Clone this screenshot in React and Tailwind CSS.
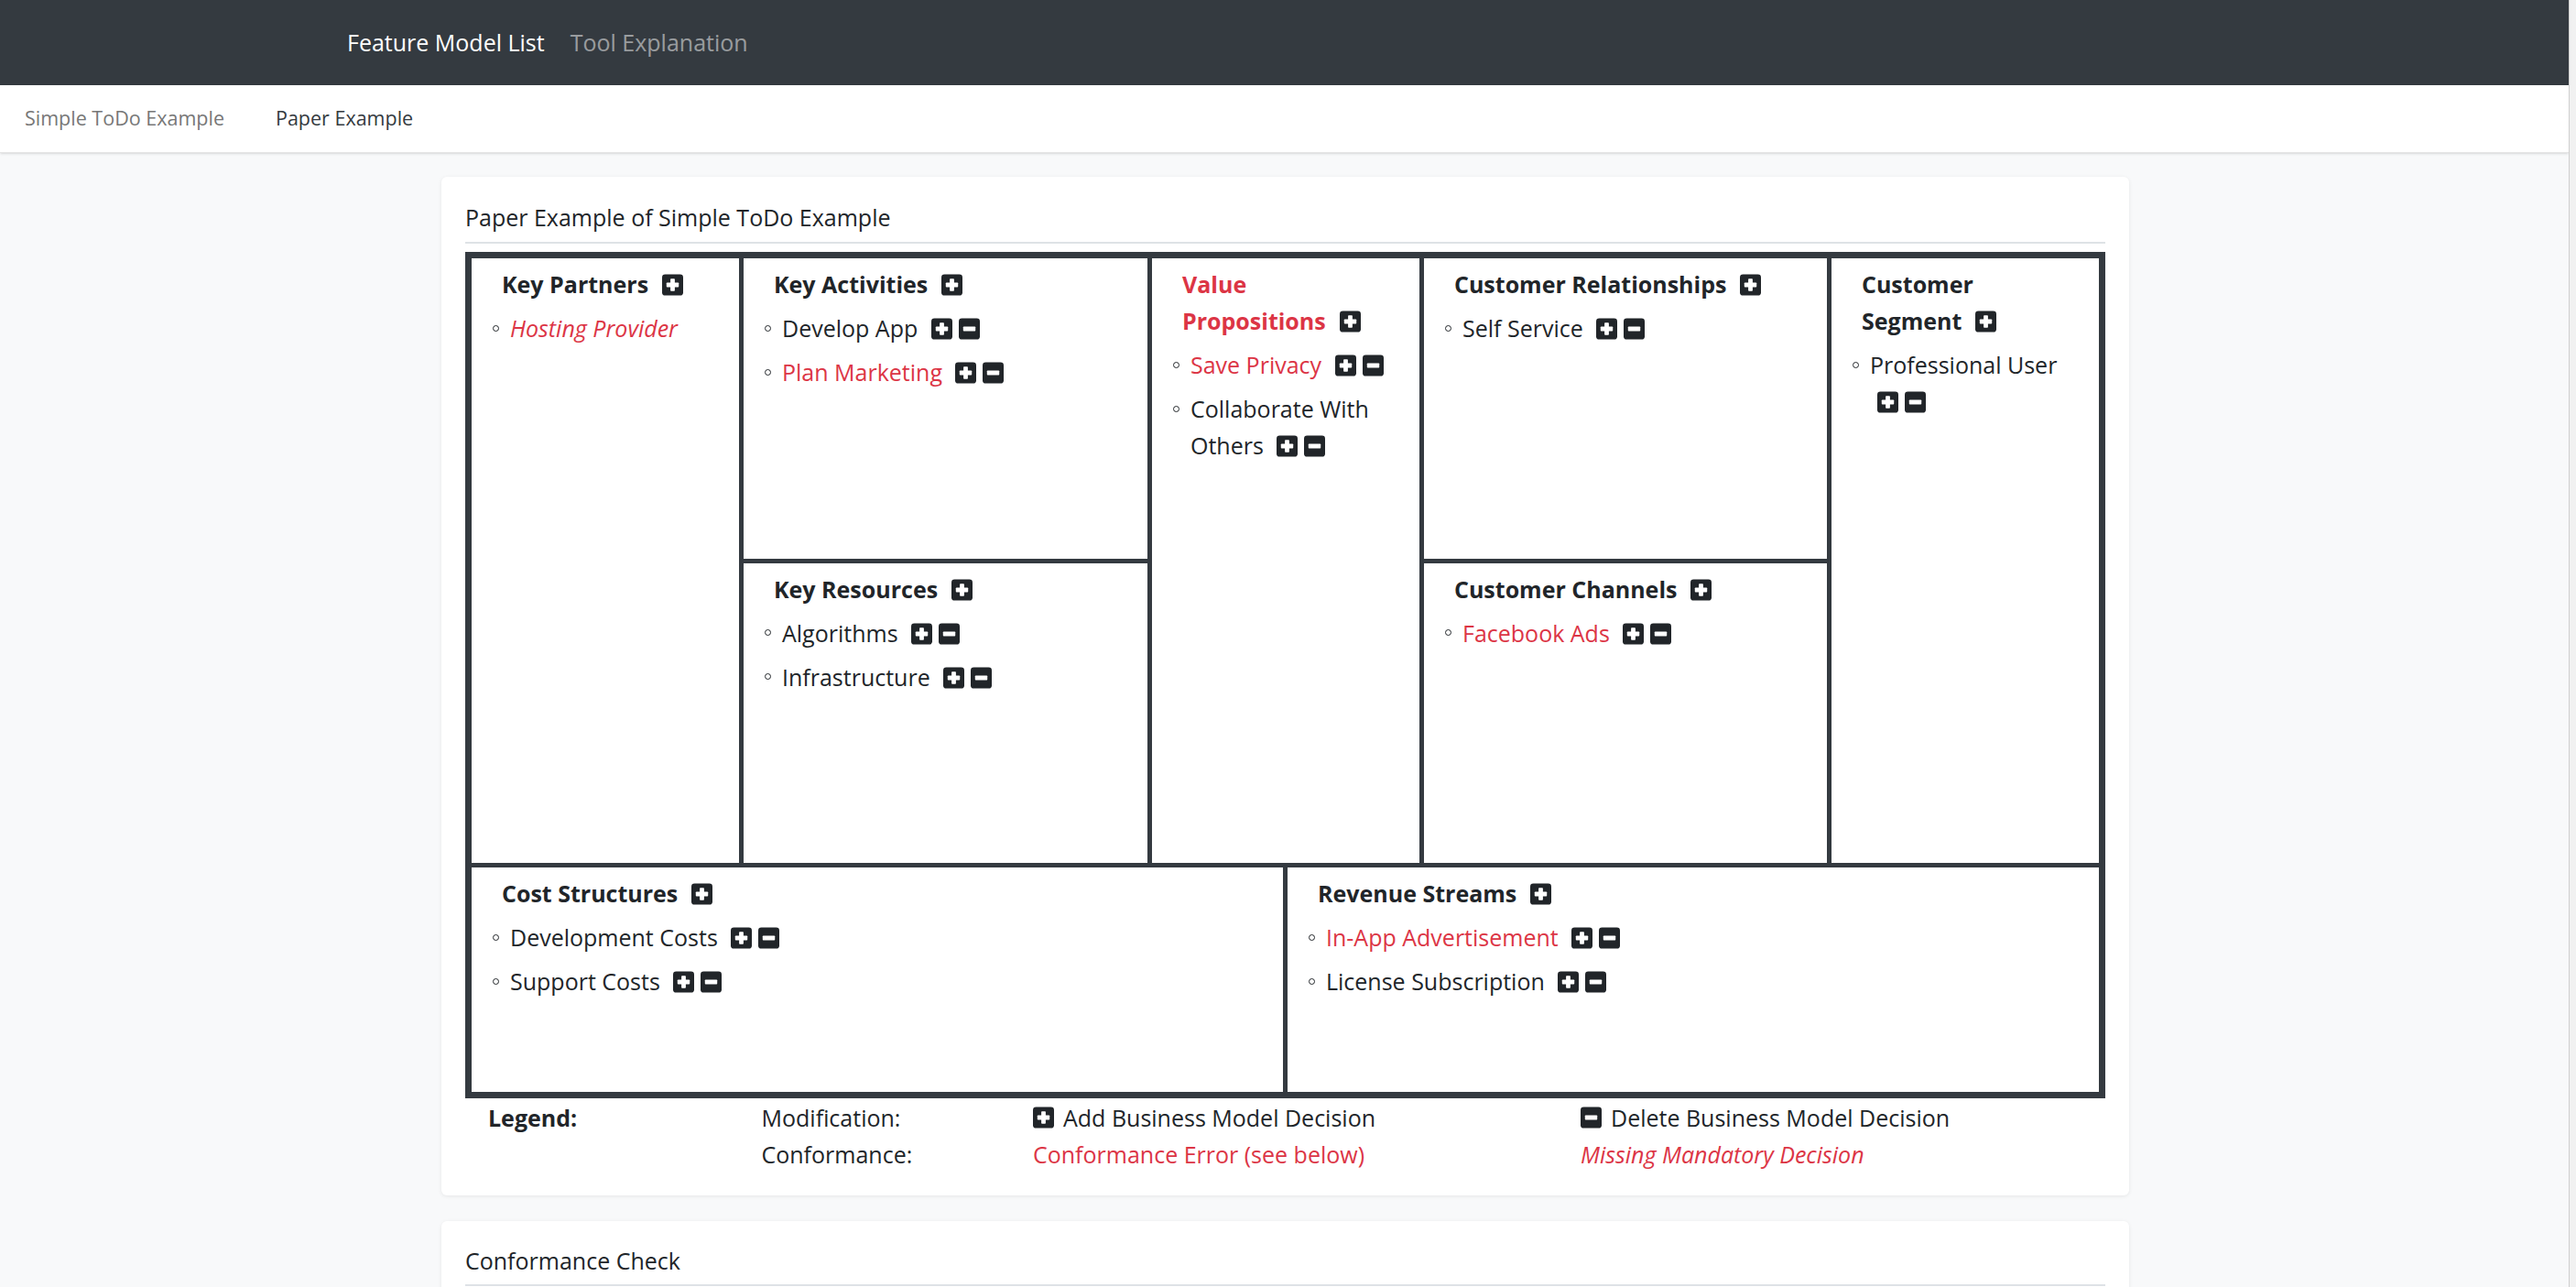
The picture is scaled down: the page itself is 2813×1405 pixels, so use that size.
import React from 'react';

const FONT = "font-['Open_Sans',sans-serif]";
const LINE = 'border-[#343a40]';

function PlusBox({ className = '' }) {
  return (
    <svg viewBox="0 0 24 24" className={`inline-block w-[23px] h-[24px] ${className}`}>
      <rect x="0" y="0" width="24" height="24" rx="3.5" fill="#212529" />
      <rect x="9.5" y="5" width="5" height="14" rx="0.8" fill="#fff" />
      <rect x="5" y="9.5" width="14" height="5" rx="0.8" fill="#fff" />
    </svg>
  );
}

function MinusBox({ className = '' }) {
  return (
    <svg viewBox="0 0 24 24" className={`inline-block w-[23px] h-[24px] ${className}`}>
      <rect x="0" y="0" width="24" height="24" rx="3.5" fill="#212529" />
      <rect x="5" y="9.5" width="14" height="5" rx="0.8" fill="#fff" />
    </svg>
  );
}

function Item({ text, kind, buttons = true }) {
  let tone = '';
  if (kind === 'error') tone = 'text-[#dc3545]';
  if (kind === 'missing') tone = 'text-[#dc3545] italic';
  return (
    <li className="flex">
      <span className="w-[26px] h-[40px] shrink-0 flex items-center pl-[7px]">
        <span className="w-[7px] h-[7px] rounded-full border-[1.5px] border-[#212529]" />
      </span>
      <span className="leading-[40px]">
        <span className={tone}>{text}</span>
        {buttons && (
          <>
            {' '}
            <span className="inline-flex gap-[7px] ml-[8px] align-middle -mt-[4px]">
              <PlusBox />
              <MinusBox />
            </span>
          </>
        )}
      </span>
    </li>
  );
}

function Cell({ title, error, items, className = '' }) {
  const words = title.split(' ');
  const last = words.pop();
  return (
    <div className={`min-w-0 px-[16px] pt-[8px] ${className}`}>
      <h6 className={`pl-[17px] pr-[4px] font-bold leading-[40px] ${error ? 'text-[#dc3545]' : ''}`}>
        {words.length > 0 && words.join(' ') + ' '}
        <span className="whitespace-nowrap">
          {last}
          <PlusBox className="ml-[15px] align-middle -mt-[4px]" />
        </span>
      </h6>
      <ul className="mt-[8px] flex flex-col gap-[8px]">
        {items.map((it) => (
          <Item key={it.text} {...it} />
        ))}
      </ul>
    </div>
  );
}

export default function App() {
  return (
    <div className={`h-[1405px] overflow-hidden flex bg-[#f8f9fa] text-[25px] text-[#212529] ${FONT}`}>
      <div className="flex-1 min-w-0">
        <nav className="h-[93px] bg-[#343a40] flex items-center pl-[379px] gap-[28px]">
          <a className="text-white">Feature Model List</a>
          <a className="text-white/50">Tool Explanation</a>
        </nav>

        <div className="h-[74px] bg-white shadow-sm flex items-center pl-[27px] gap-[56px] border-b border-[#e5e5e5] text-[21.5px]">
          <a className="text-[#777]">Simple ToDo Example</a>
          <a className="text-[#343a40]">Paper Example</a>
        </div>

        <section className="ml-[482px] w-[1843px] mt-[26px] bg-white rounded-[6px] shadow-[0_1px_4px_rgba(0,0,0,0.08)] px-[26px] pt-[25px] pb-[25px]">
          <h5 className="leading-[39px]">Paper Example of Simple ToDo Example</h5>
          <div className="mt-[7px] h-[2px] bg-[#dee2e6]" />

          <div className={`mt-[9px] border-[7px] ${LINE}`}>
            <div className="h-[660px] flex">
              <Cell className="w-[292px] shrink-0" title="Key Partners" items={[{ text: 'Hosting Provider', kind: 'missing', buttons: false }]} />
              <div className={`w-[446px] shrink-0 flex flex-col border-l-[5px] ${LINE}`}>
                <Cell className="flex-1" title="Key Activities" items={[{ text: 'Develop App' }, { text: 'Plan Marketing', kind: 'error' }]} />
                <Cell className={`flex-1 border-t-[5px] ${LINE}`} title="Key Resources" items={[{ text: 'Algorithms' }, { text: 'Infrastructure' }]} />
              </div>
              <Cell
                className={`w-[297px] shrink-0 border-l-[5px] ${LINE}`}
                title="Value Propositions"
                error
                items={[{ text: 'Save Privacy', kind: 'error' }, { text: 'Collaborate With Others' }]}
              />
              <div className={`w-[445px] shrink-0 flex flex-col border-l-[5px] ${LINE}`}>
                <Cell className="flex-1" title="Customer Relationships" items={[{ text: 'Self Service' }]} />
                <Cell className={`flex-1 border-t-[5px] ${LINE}`} title="Customer Channels" items={[{ text: 'Facebook Ads', kind: 'error' }]} />
              </div>
              <Cell className={`flex-1 border-l-[5px] ${LINE}`} title="Customer Segment" items={[{ text: 'Professional User' }]} />
            </div>
            <div className={`h-[250px] flex border-t-[5px] ${LINE}`}>
              <Cell className="w-[886px] shrink-0" title="Cost Structures" items={[{ text: 'Development Costs' }, { text: 'Support Costs' }]} />
              <Cell
                className={`flex-1 border-l-[5px] ${LINE}`}
                title="Revenue Streams"
                items={[{ text: 'In-App Advertisement', kind: 'error' }, { text: 'License Subscription' }]}
              />
            </div>
          </div>

          <div className="mt-[1px] grid grid-cols-12 leading-[40px]">
            <div className="col-span-2 pl-[25px] font-bold">Legend:</div>
            <div className="col-span-2 pl-[25px]">Modification:</div>
            <div className="col-span-4 pl-[23px] flex items-center gap-[10px]">
              <PlusBox />
              <span>Add Business Model Decision</span>
            </div>
            <div className="col-span-4 pl-[24px] flex items-center gap-[10px]">
              <MinusBox />
              <span>Delete Business Model Decision</span>
            </div>
            <div className="col-span-2" />
            <div className="col-span-2 pl-[25px]">Conformance:</div>
            <div className="col-span-4 pl-[23px] text-[#dc3545]">Conformance Error (see below)</div>
            <div className="col-span-4 pl-[24px] text-[#dc3545] italic">Missing Mandatory Decision</div>
          </div>
        </section>

        <section className="ml-[482px] w-[1843px] mt-[28px] bg-white rounded-[6px] shadow-[0_1px_4px_rgba(0,0,0,0.08)] px-[26px] pt-[24px] pb-[23px]">
          <h5 className="leading-[39px]">Conformance Check</h5>
          <div className="mt-[6px] h-[2px] bg-[#dee2e6]" />
          <div className="h-[200px]" />
        </section>
      </div>
      <div className="w-[8px] shrink-0 bg-[#f1f1f1] border-l border-[#cfcfcf]" />
    </div>
  );
}
